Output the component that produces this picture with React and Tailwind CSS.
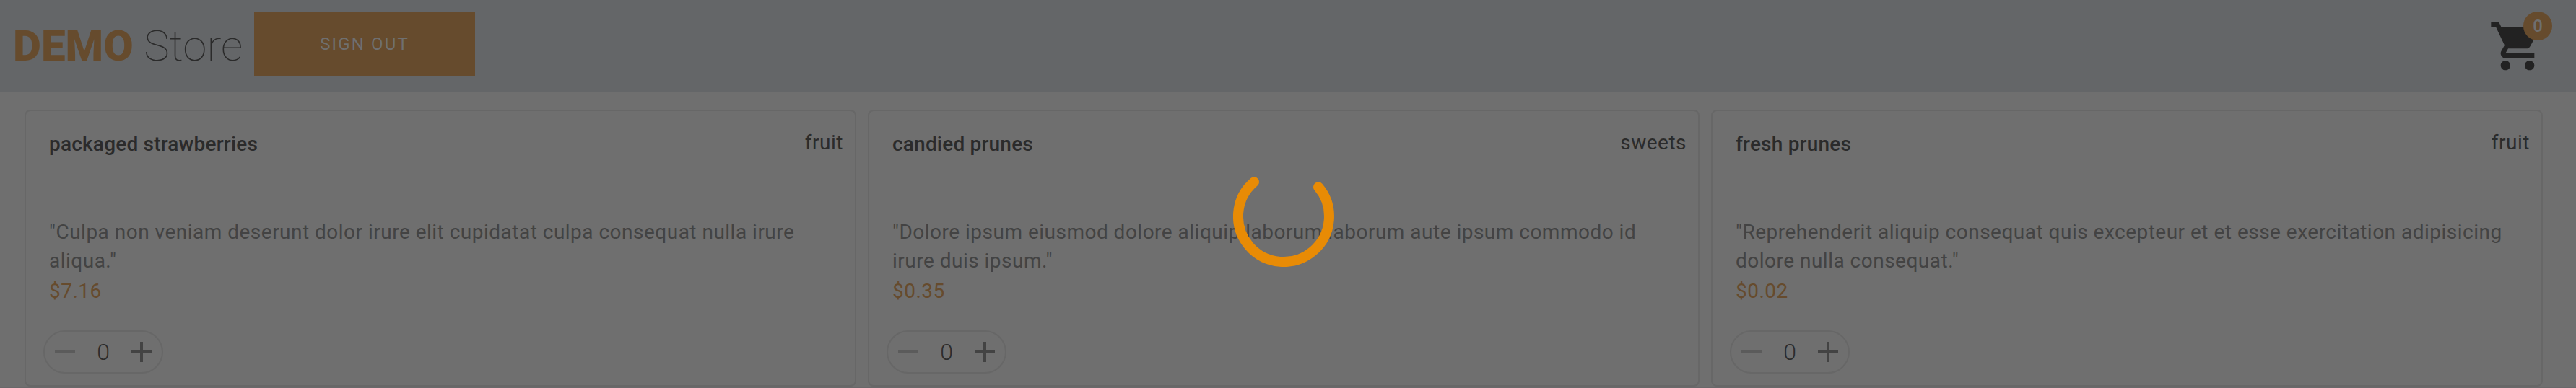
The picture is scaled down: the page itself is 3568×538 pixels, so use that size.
import { MdShoppingCart } from "react-icons/md";

const products = [
  {
    name: "packaged strawberries",
    category: "fruit",
    lines: ['"Culpa non veniam deserunt dolor irure elit cupidatat culpa consequat nulla irure', 'aliqua."'],
    price: "$7.16",
  },
  {
    name: "candied prunes",
    category: "sweets",
    lines: ['"Dolore ipsum eiusmod dolore aliquip laborum laborum aute ipsum commodo id', 'irure duis ipsum."'],
    price: "$0.35",
  },
  {
    name: "fresh prunes",
    category: "fruit",
    lines: ['"Reprehenderit aliquip consequat quis excepteur et et esse exercitation adipisicing', 'dolore nulla consequat."'],
    price: "$0.02",
  },
];

function Header() {
  return (
    <header className="flex h-32 shrink-0 items-center bg-[#646668] pl-[18px] pr-[33px]">
      <h1 className="w-[334px] shrink-0 whitespace-nowrap text-[60px] leading-[64px] font-thin tracking-[0.1px] text-[#2b2b2b]">
        <span className="font-black text-[#664b2d]">DEMO</span> Store
      </h1>
      <button className="mb-[6px] flex h-[90px] w-[306px] items-center justify-center bg-[#664b2d] text-2xl tracking-[2.14px] text-[#6f6f6f]">
        SIGN OUT
      </button>
      <div className="relative ml-auto mr-[8px] h-20 w-20">
        <MdShoppingCart className="size-20 text-[#222222]" />
        <span className="absolute -top-2 left-12 flex size-10 items-center justify-center rounded-full bg-[#664b2d] text-2xl font-medium text-[#6f6f6f]">
          0
        </span>
      </div>
    </header>
  );
}

function Stepper() {
  return (
    <div className="-ml-2 mt-[34px] flex h-[60px] w-[166px] items-center justify-between rounded-full border-2 border-[#676767] px-[14px]">
      <span className="h-1 w-7 bg-[#5b5b5b]" />
      <span className="text-[32px] leading-[40px] font-light text-[#2b2b2b]">0</span>
      <svg className="size-7" viewBox="0 0 28 28" fill="#434343">
        <path d="M12 0h4v12h12v4H16v12h-4V16H0v-4h12z" />
      </svg>
    </div>
  );
}

function ProductCard({ product }) {
  return (
    <article className="h-[384px] rounded-lg border-2 border-[#676767] pl-8 pr-4 pt-6">
      <div className="flex items-start justify-between text-[28px] leading-[40px] text-[#2b2b2b]">
        <h2 className="mt-[2px] font-medium tracking-[0.2px]">{product.name}</h2>
        <span className="tracking-[0.5px]">{product.category}</span>
      </div>
      <div className="mt-[82px] text-[28px] leading-[40px] tracking-[0.49px]">
        {product.lines.map((line) => (
          <p key={line} className="whitespace-nowrap text-[#434343]">
            {line}
          </p>
        ))}
        <p className="mt-[2px] text-[#664b2d]">{product.price}</p>
      </div>
      <Stepper />
    </article>
  );
}

export default function App() {
  return (
    <div className="relative flex h-[538px] w-full flex-col overflow-hidden border-b border-[#6a686a] bg-[#6f6f6f] font-[Roboto,sans-serif]">
      <Header />
      <main className="grid grid-cols-3 gap-4 pl-[34px] pr-[46px] pt-6">
        {products.map((product) => (
          <ProductCard key={product.name} product={product} />
        ))}
      </main>
      <svg className="absolute left-[1708px] top-[230px] size-[140px]" viewBox="0 0 140 140" fill="none">
        <path d="M118 29.3A63 63 0 1 1 29 22.2" stroke="#e88b05" strokeWidth="14" strokeLinecap="round" />
      </svg>
    </div>
  );
}
